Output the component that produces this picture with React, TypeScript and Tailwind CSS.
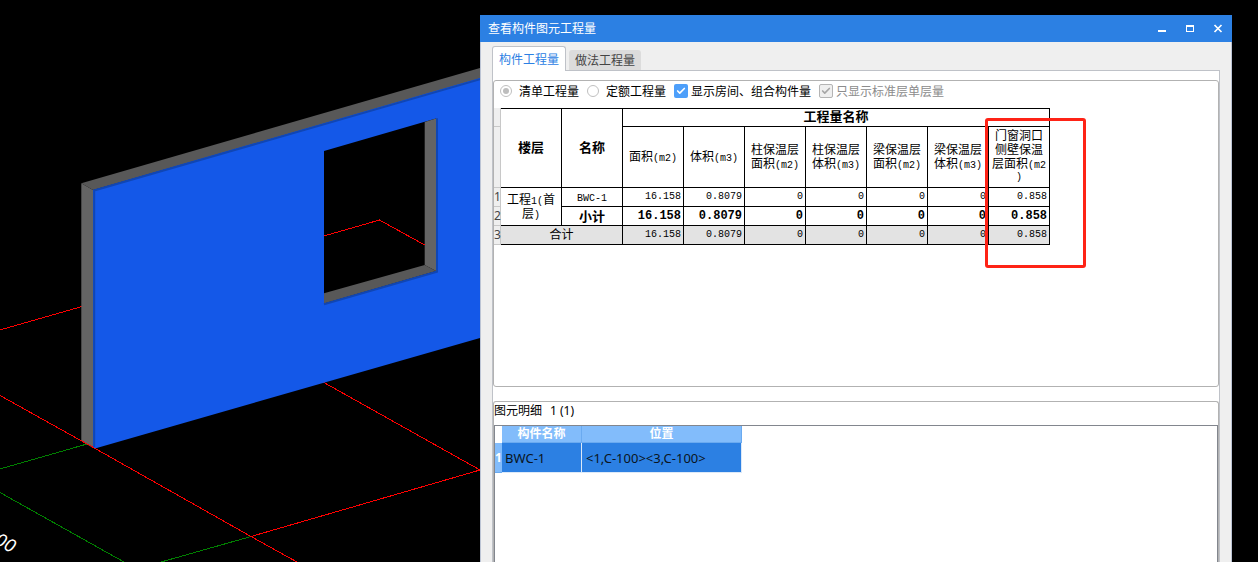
import React from "react";
import { Check } from "lucide-react";

const UI_FONT = "font-['Noto_Sans','Noto_Sans_CJK_SC',sans-serif]";

function Scene() {
  return (
    <svg
      className="block h-[562px] w-[480px] shrink-0"
      viewBox="0 0 480 562"
      role="img"
      aria-label="BWC-1"
    >
      <g stroke="#ff0000" strokeWidth="1" fill="none" shapeRendering="crispEdges">
        <path d="M0 330 L82 306.500" />
        <path d="M251 536.500 L480 470" />
        <path d="M323 382 L480 470" />
      </g>
      <g stroke="#008000" strokeWidth="1" fill="none" shapeRendering="crispEdges">
        <path d="M0 469 L87 444" />
        <path d="M0 492.500 L124 562" />
        <path d="M251 536.500 L161 562" />
      </g>
      <path d="M81.300 183.300 L93 190 L93 448 L81.300 441 Z" fill="#646464" />
      <path d="M81.300 183.300 L480 68 L480 79 L93 190 Z" fill="#585858" />
      <path
        fillRule="evenodd"
        fill="#1458e8"
        d="M93 190 L480 78 L480 338 L95 448.500 L93 447.500 Z M324 151 L436 118.500 L436 271 L324 303.500 Z"
      />
      <path d="M94.200 447 L94.200 190.600 L480 79.200" stroke="#1046b4" strokeWidth="2" fill="none" />
      <path d="M424.700 122 L436 118.500 L436 271 L424.700 265 Z" fill="#646464" />
      <path d="M324 293.300 L424.700 265 L436 271 L324 303.500 Z" fill="#585858" />
      <path d="M437 118.300 L437 271.800 L324 304.300" stroke="#1046b4" strokeWidth="2" fill="none" />
      <g stroke="#ff0000" strokeWidth="1" fill="none" shapeRendering="crispEdges">
        <path d="M324 236 L379.500 220 L424.700 245" />
        <path d="M0 395.500 L96 449 L251 536.500 L297 562" />
      </g>
      <text
        transform="translate(-7 543) rotate(29) skewX(-8)"
        fill="#ffffff"
        fontSize="18"
        fontFamily="Noto Sans, sans-serif"
      >
        00
      </text>
    </svg>
  );
}

function TitleBar() {
  return (
    <header className="flex h-[27px] items-center justify-between bg-[#2c80e3] pl-2 pr-2 text-white">
      <h1 className="text-[12px] leading-4">查看构件图元工程量</h1>
      <div className="flex items-center gap-4">
        <button type="button" aria-label="最小化" className="flex size-3 items-center justify-center">
          <svg className="size-3" viewBox="0 0 12 12">
            <rect x="2" y="7" width="8" height="2" fill="#fff" />
          </svg>
        </button>
        <button type="button" aria-label="最大化" className="flex size-3 items-center justify-center">
          <svg className="size-3" viewBox="0 0 12 12">
            <path d="M2 2h8v7H2z M3 4v4h6V4z" fill="#fff" fillRule="evenodd" />
          </svg>
        </button>
        <button type="button" aria-label="关闭" className="flex size-3 items-center justify-center">
          <svg className="size-3" viewBox="0 0 12 12">
            <path d="M2.500 2 L9.500 9 M9.500 2 L2.500 9" stroke="#fff" strokeWidth="1.700" />
          </svg>
        </button>
      </div>
    </header>
  );
}

function Radio({ label, checked }: { label: string; checked?: boolean }) {
  return (
    <label className="flex items-center gap-[7px]">
      <span className="relative flex size-3 items-center justify-center">
        <input
          type="radio"
          name="mode"
          defaultChecked={checked}
          className="peer size-3 appearance-none rounded-full border border-[#c0c0c0] bg-white"
        />
        <span className="pointer-events-none absolute hidden size-1.5 rounded-full bg-[#bdbdbd] peer-checked:block" />
      </span>
      <span className="pt-0.5">{label}</span>
    </label>
  );
}

function CheckOption({ label, disabled }: { label: string; disabled?: boolean }) {
  return (
    <label className={disabled ? "flex items-center gap-[3px] text-[#8c8c8c]" : "flex items-center gap-[3px]"}>
      <span className="relative flex size-3.5 items-center justify-center">
        <input
          type="checkbox"
          defaultChecked
          disabled={disabled}
          className="peer size-3.5 appearance-none rounded-[2px] bg-[#4d9ffa] disabled:border disabled:border-[#b4b4b4] disabled:bg-[#efefef]"
        />
        <Check
          className={
            disabled
              ? "pointer-events-none absolute size-2.5 text-[#a6a6a6]"
              : "pointer-events-none absolute size-2.5 text-white"
          }
          strokeWidth={4}
        />
      </span>
      <span className="pt-0.5">{label}</span>
    </label>
  );
}

function Num({ children }: { children: React.ReactNode }) {
  return <span className="font-['Liberation_Mono',monospace] text-[10px] leading-none">{children}</span>;
}

const COLUMNS: { lines: string[]; unit: string; tail?: string }[] = [
  { lines: ["面积"], unit: "(m2)" },
  { lines: ["体积"], unit: "(m3)" },
  { lines: ["柱保温层", "面积"], unit: "(m2)" },
  { lines: ["柱保温层", "体积"], unit: "(m3)" },
  { lines: ["梁保温层", "面积"], unit: "(m2)" },
  { lines: ["梁保温层", "体积"], unit: "(m3)" },
  { lines: ["门窗洞口", "侧壁保温", "层面积"], unit: "(m2", tail: ")" },
];

const VALUES = ["16.158", "0.8079", "0", "0", "0", "0", "0.858"];

const CELL = "border-b border-r border-black p-0 text-center font-normal";
const HEAD = "border-y border-r border-black p-0 pb-[3px] text-[13px] font-bold";
const INDEX = "border-b border-r border-[#c8c8c8] bg-[#efefef] p-0 text-left font-normal text-[#444]";

function QuantityTable() {
  return (
    <div className="relative">
      <table className="w-[556px] table-fixed border-separate border-spacing-0 text-[12px] leading-[14px] text-black">
        <colgroup>
          <col className="w-[7px]" />
          <col span={9} className="w-[61px]" />
        </colgroup>
        <thead>
          <tr className="h-[19px]">
            <td className={INDEX} />
            <th rowSpan={2} className={HEAD}>
              楼层
            </th>
            <th rowSpan={2} className={HEAD}>
              名称
            </th>
            <th colSpan={7} className={HEAD}>
              工程量名称
            </th>
          </tr>
          <tr className="h-[61px]">
            <td className={INDEX} />
            {COLUMNS.map((c, i) => (
              <th key={i} className={CELL}>
                {c.lines.map((line, j) => (
                  <span key={j} className="block whitespace-nowrap">
                    {line}
                    {j === c.lines.length - 1 && <Num>{c.unit}</Num>}
                  </span>
                ))}
                {c.tail && (
                  <span className="block font-['Liberation_Mono',monospace] text-[10px]">{c.tail}</span>
                )}
              </th>
            ))}
          </tr>
        </thead>
        <tbody>
          <tr className="h-[19px]">
            <th className={INDEX}>1</th>
            <td rowSpan={2} className={CELL}>
              工程<Num>1(</Num>首
              <br />层<Num>)</Num>
            </td>
            <td className={CELL}>
              <Num>BWC-1</Num>
            </td>
            {VALUES.map((v, i) => (
              <td key={i} className="border-b border-r border-black p-0 pr-0.5 text-right font-['Liberation_Mono',monospace] text-[10px]">
                {v}
              </td>
            ))}
          </tr>
          <tr className="h-[19px]">
            <th className={INDEX}>2</th>
            <td className="border-b border-r border-black p-0 text-center text-[13px] font-bold">小计</td>
            {VALUES.map((v, i) => (
              <td key={i} className="border-b border-r border-black p-0 pr-0.5 text-right font-['Liberation_Mono',monospace] text-[12px] font-bold">
                {v}
              </td>
            ))}
          </tr>
          <tr className="h-[19px] bg-[#e3e3e3]">
            <th className={INDEX}>3</th>
            <td colSpan={2} className={CELL}>
              合计
            </td>
            {VALUES.map((v, i) => (
              <td key={i} className="border-b border-r border-black p-0 pr-0.5 text-right font-['Liberation_Mono',monospace] text-[10px]">
                {v}
              </td>
            ))}
          </tr>
        </tbody>
      </table>
      <div className="pointer-events-none absolute left-[491px] top-[10px] h-[150px] w-[101px] rounded-[3px] border-3 border-[#fe2316]" />
    </div>
  );
}

function DetailTable() {
  return (
    <table className="w-[247px] table-fixed border-separate border-spacing-0 text-[12px] leading-4">
      <colgroup>
        <col className="w-[7px]" />
        <col className="w-[80px]" />
        <col className="w-[160px]" />
      </colgroup>
      <thead>
        <tr className="h-[17px] text-white">
          <td className="p-0" />
          <th className="border-b border-r border-[#6aaaf0] bg-[#82bcfb] p-0 font-bold">构件名称</th>
          <th className="border-b border-r border-[#6aaaf0] bg-[#82bcfb] p-0 font-bold">位置</th>
        </tr>
      </thead>
      <tbody>
        <tr className="h-[30px] bg-[#2c80e3] text-[13px] text-[#0a1420]">
          <th className="border-b border-[#6aaaf0] bg-[#82bcfb] p-0 text-left text-[12px] font-bold text-white">1</th>
          <td className="border-b border-r border-[#dce9f8] p-0 pl-[3px]">BWC-1</td>
          <td className="border-b border-r border-[#dce9f8] p-0 pl-1">&lt;1,C-100&gt;&lt;3,C-100&gt;</td>
        </tr>
      </tbody>
    </table>
  );
}

export default function App() {
  return (
    <div className={`flex min-h-screen bg-black text-[12px] leading-4 text-black ${UI_FONT}`}>
      <Scene />
      <main className="mr-[26px] mt-[15px] flex min-w-0 flex-1 flex-col bg-[#efefef]">
        <TitleBar />
        <div className="flex flex-1 flex-col border-x border-[#bcc4d4] px-[11px] pt-1">
          <div role="tablist" className="flex items-end gap-[3px]">
            <button
              type="button"
              role="tab"
              aria-selected="true"
              className="relative z-10 -mb-px h-[25px] rounded-t-[3px] border border-b-0 border-[#bfc2c8] bg-white px-1.5 pt-0.5 text-[#2c80e3]"
            >
              构件工程量
            </button>
            <button
              type="button"
              role="tab"
              aria-selected="false"
              className="h-5 rounded-t-[3px] bg-[#dcdcdc] px-1.5 pt-0.5 text-[#444]"
            >
              做法工程量
            </button>
          </div>
          <div className="flex flex-1 flex-col border border-b-0 border-[#bfc2c8] bg-white pt-[9px]">
            <section className="min-h-[307px] rounded-[3px] border border-[#b2b2b2]">
              <div className="mb-[7px] flex h-5 items-center gap-2 whitespace-nowrap pl-1.5">
                <Radio label="清单工程量" checked />
                <Radio label="定额工程量" />
                <CheckOption label="显示房间、组合构件量" />
                <CheckOption label="只显示标准层单层量" disabled />
              </div>
              <QuantityTable />
            </section>
            <section className="mt-3.5 flex flex-1 flex-col rounded-t-[3px] border border-b-0 border-[#b2b2b2]">
              <h2 className="flex h-[23px] gap-2 pt-px">
                <span>图元明细</span>
                <span>1 (1)</span>
              </h2>
              <div className="flex-1 border border-b-0 border-[#82868e] bg-white">
                <DetailTable />
              </div>
            </section>
          </div>
        </div>
      </main>
    </div>
  );
}
